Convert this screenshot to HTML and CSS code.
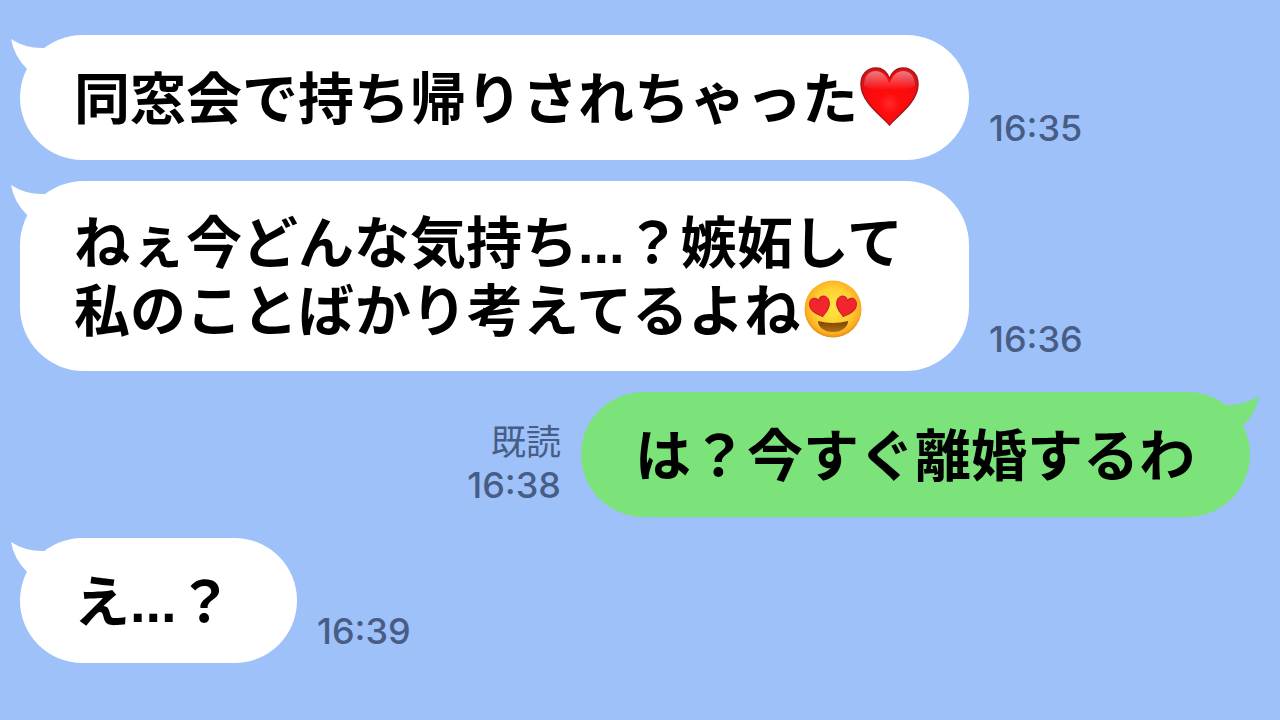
FILE: index.html
```html
<!DOCTYPE html>
<html lang="ja">
<head>
    <meta charset="UTF-8">
    <meta name="viewport" content="width=device-width, initial-scale=1.0">
    <title>トーク</title>
    <link rel="stylesheet" href="styles.css">
</head>
<body>
    <main class="chat">
        <div class="message">
            <div class="bubble">
                <svg class="tail" viewBox="0 0 40 40" aria-hidden="true"><path d="M1 4Q16 14 36 13L40 34H17Q4 21 1 4Z"/></svg>
                <p>同窓会で持ち帰りされちゃった<svg class="emoji" viewBox="0 0 56 56" role="img" aria-label="ハート">
                    <defs>
                        <radialGradient id="heart-fill" cx="50%" cy="62%" r="60%">
                            <stop offset="0" stop-color="#ff2a2a"/>
                            <stop offset="0.3" stop-color="#ff0c0c"/>
                            <stop offset="0.75" stop-color="#f80a10"/>
                            <stop offset="1" stop-color="#dc1016"/>
                        </radialGradient>
                        <linearGradient id="heart-shine" x1="0" y1="0" x2="0" y2="1">
                            <stop offset="0" stop-color="#fff" stop-opacity="0.45"/>
                            <stop offset="1" stop-color="#fff" stop-opacity="0"/>
                        </linearGradient>
                    </defs>
                    <path d="M28.500 56C20 46 0 33 0 15C0 6 6-1 15-1C22-1 27 4 28.500 10C30 4 35-1 42-1C51-1 57 6 57 15C57 33 37 46 28.500 56Z" fill="url(#heart-fill)" stroke="#a8161a" stroke-width="1.500"/>
                    <path d="M3 17C3 7 8 2 15 2C21 2 26 7 28.500 15C31 7 36 2 42 2C49 2 54 7 54 17C46 21 36 22 28.500 20C21 22 11 21 3 17Z" fill="url(#heart-shine)"/>
                </svg></p>
            </div>
            <div class="meta"><time>16:35</time></div>
        </div>

        <div class="message">
            <div class="bubble">
                <svg class="tail" viewBox="0 0 40 40" aria-hidden="true"><path d="M1 4Q16 14 36 13L40 34H17Q4 21 1 4Z"/></svg>
                <p>ねぇ今どんな気持ち...？嫉妬して私のことばかり考えてるよね<svg class="emoji" viewBox="0 0 56 56" role="img" aria-label="目がハートの笑顔">
                    <defs>
                        <radialGradient id="face-fill" cx="50%" cy="46%" r="54%">
                            <stop offset="0" stop-color="#ffe640"/>
                            <stop offset="0.6" stop-color="#ffd032"/>
                            <stop offset="0.88" stop-color="#fbae22"/>
                            <stop offset="1" stop-color="#e58c1a"/>
                        </radialGradient>
                        <linearGradient id="mouth-fill" x1="0" y1="0" x2="0" y2="1">
                            <stop offset="0" stop-color="#7c4206"/>
                            <stop offset="1" stop-color="#b0700f"/>
                        </linearGradient>
                        <path id="eye" d="M0 11C-3 8-10 5-10-2C-10-7-7-9-4.500-9C-2-9-0.500-7 0-5C0.500-7 2-9 4.500-9C7-9 10-7 10-2C10 5 3 8 0 11Z"/>
                    </defs>
                    <circle cx="30" cy="28" r="28.500" fill="url(#face-fill)"/>
                    <g fill="#f2242e" stroke="#c4202a" stroke-width="1">
                        <use href="#eye" transform="translate(17 25) rotate(-14)"/>
                        <use href="#eye" transform="translate(43 25) rotate(14)"/>
                    </g>
                    <path d="M15 40Q30 44 45 40C45 46 39 51 30 51C21 51 15 46 15 40Z" fill="url(#mouth-fill)"/>
                </svg></p>
            </div>
            <div class="meta"><time>16:36</time></div>
        </div>

        <div class="message mine">
            <div class="bubble">
                <svg class="tail" viewBox="0 0 40 40" aria-hidden="true"><path d="M1 4Q16 14 36 13L40 34H17Q4 21 1 4Z"/></svg>
                <p>は？今すぐ離婚するわ</p>
            </div>
            <div class="meta"><span>既読</span><time>16:38</time></div>
        </div>

        <div class="message">
            <div class="bubble">
                <svg class="tail" viewBox="0 0 40 40" aria-hidden="true"><path d="M1 4Q16 14 36 13L40 34H17Q4 21 1 4Z"/></svg>
                <p>え...？</p>
            </div>
            <div class="meta"><time>16:39</time></div>
        </div>
    </main>
</body>
</html>
```
FILE: styles.css
```css
* {
    margin: 0;
    padding: 0;
    box-sizing: border-box;
}

body {
    min-height: 100vh;
    background: #9fc1fa;
    color: #000;
    font-family: "Liberation Sans", "Noto Sans CJK JP", sans-serif;
}

.chat {
    display: flex;
    flex-direction: column;
    gap: 21px;
    padding: 35px 30px 35px 20px;
}

.message {
    display: flex;
    align-items: flex-end;
    gap: 20px;
}

.message.mine {
    flex-direction: row-reverse;
}

/* Bubbles */
.bubble {
    position: relative;
    display: flex;
    align-items: center;
    min-width: 277px;
    max-width: 949px;
    min-height: 125px;
    padding: 29px 55px 25px 54px;
    border-radius: 64px;
    background: #fff;
    font-size: 56px;
    font-weight: 700;
    line-height: 68px;
}

.mine .bubble {
    background: #7ce27a;
}

.tail {
    position: absolute;
    top: 0;
    left: -10px;
    width: 40px;
    height: 40px;
    fill: #fff;
}

.mine .tail {
    left: auto;
    right: -10px;
    fill: #7ce27a;
    transform: scaleX(-1);
}

.emoji {
    width: 56px;
    height: 56px;
    margin: 0 -3px 0 3px;
    overflow: visible;
    vertical-align: -6px;
}

/* Read mark and time */
.meta {
    display: flex;
    flex-direction: column;
    align-items: flex-end;
    margin-bottom: 10px;
    color: #475d85;
    font-family: Inter, "Noto Sans CJK JP", sans-serif;
    font-size: 35px;
    line-height: 43px;
}

.meta time {
    font-size: 36px;
    font-weight: 500;
}
```
